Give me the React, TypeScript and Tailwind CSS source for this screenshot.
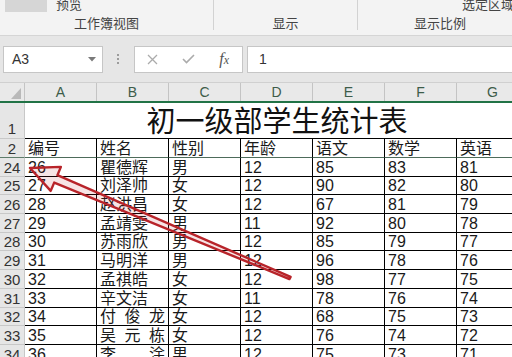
import React from 'react';

const cols = ['A', 'B', 'C', 'D', 'E', 'F', 'G'];
const heads = ['编号', '姓名', '性别', '年龄', '语文', '数学', '英语'];

const rows: string[][] = [
  ['24', '26', '瞿德辉', '男', '12', '85', '83', '81'],
  ['25', '27', '刘泽帅', '女', '12', '90', '82', '80'],
  ['26', '28', '赵洪昌', '女', '12', '67', '81', '79'],
  ['27', '29', '孟靖雯', '男', '11', '92', '80', '78'],
  ['28', '30', '苏雨欣', '男', '12', '85', '79', '77'],
  ['29', '31', '马明洋', '男', '12', '96', '78', '76'],
  ['30', '32', '孟祺皓', '女', '12', '98', '77', '75'],
  ['31', '33', '辛文洁', '女', '11', '78', '76', '74'],
  ['32', '34', '付俊龙', '女', '12', '68', '75', '73'],
  ['33', '35', '吴元栋', '女', '12', '76', '74', '72'],
  ['34', '36', '李涂', '男', '12', '75', '73', '71'],
];

// names typed with full-width spaces show up spread over the cell
const spread = new Set(['付俊龙', '吴元栋', '李涂']);

function RowHead({ label, className = '' }: { label: string; className?: string }) {
  return (
    <div
      className={`w-[25px] shrink-0 bg-[#e6e6e6] border-r border-b border-[#c8c8c8] flex items-end justify-center text-[15px] leading-[17px] text-[#333] ${className}`}
    >
      {label}
    </div>
  );
}

function Cell({ children, className = '' }: { children: React.ReactNode; className?: string }) {
  return (
    <div
      className={`w-[72px] shrink-0 border-r border-b border-black px-[3px] flex items-end text-[16px] leading-[17px] ${className}`}
    >
      {children}
    </div>
  );
}

function Ribbon() {
  return (
    <div className="flex h-[36px] shrink-0 bg-[#f3f3f3] border-b border-[#d5d5d5] text-[13px] leading-[13px] text-[#444]">
      <div className="w-[214px] shrink-0 h-[30px] border-r border-[#d2d2d2] flex flex-col justify-between">
        <div className="flex items-start">
          <div className="ml-[5px] w-[42px] h-[12px] bg-[#d6d6d6]" />
          <span className="ml-[9px] -mt-[2px]">预览</span>
        </div>
        <div className="text-center">工作簿视图</div>
      </div>
      <div className="w-[144px] shrink-0 h-[30px] border-r border-[#d2d2d2] flex flex-col justify-end">
        <div className="text-center">显示</div>
      </div>
      <div className="w-[164px] shrink-0 h-[30px] flex flex-col justify-between">
        <span className="pl-[104px] -mt-[2px] whitespace-nowrap">选定区域</span>
        <div className="text-center">显示比例</div>
      </div>
    </div>
  );
}

function FormulaBar() {
  return (
    <div className="h-[46px] shrink-0 bg-[#e6e6e6] flex items-center">
      <div className="ml-[3px] w-[100px] h-[27px] shrink-0 bg-white border border-[#c6c6c6] flex items-center justify-between pl-[8px] pr-[6px]">
        <span className="text-[14px] text-[#333]">A3</span>
        <svg width="8" height="5" viewBox="0 0 8 5">
          <path d="M0 0 L8 0 L4 4.5 Z" fill="#7a7a7a" />
        </svg>
      </div>
      <div className="ml-[14px] w-[2px] shrink-0 flex flex-col gap-[2px]">
        <span className="w-[2px] h-[2px] bg-[#9c9c9c]" />
        <span className="w-[2px] h-[2px] bg-[#9c9c9c]" />
        <span className="w-[2px] h-[2px] bg-[#9c9c9c]" />
      </div>
      <div className="ml-[15px] w-[109px] h-[27px] shrink-0 bg-white border border-[#c6c6c6] flex items-center">
        <span className="w-[36px] flex justify-center">
          <svg width="11" height="11" viewBox="0 0 11 11">
            <path d="M1 1 L10 10 M10 1 L1 10" stroke="#ababab" strokeWidth="1.3" fill="none" />
          </svg>
        </span>
        <span className="w-[36px] flex justify-center">
          <svg width="13" height="10" viewBox="0 0 13 10">
            <path d="M1 5 L4.5 8.5 L12 1" stroke="#ababab" strokeWidth="1.6" fill="none" />
          </svg>
        </span>
        <span className="w-[36px] text-center font-['Liberation_Serif',serif] italic text-[16px] text-[#555] leading-none">
          f<span className="text-[12px]">x</span>
        </span>
      </div>
      <div className="ml-[4px] w-[280px] h-[27px] shrink-0 bg-white border border-[#c6c6c6] flex items-center pl-[11px] text-[14px] text-[#333]">
        1
      </div>
    </div>
  );
}

function Sheet() {
  return (
    <div className="flex flex-col w-max">
      {/* column letters */}
      <div className="flex h-[21px] bg-[#e9e9e9] border-t border-[#d0d0d0] border-b-2 border-b-[#217346]">
        <div className="w-[25px] shrink-0 border-r border-[#c4c4c4] flex items-end justify-end pr-[3px] pb-[2px]">
          <svg width="10" height="11" viewBox="0 0 10 11">
            <path d="M10 0 L10 11 L0 11 Z" fill="#b9b9b9" />
          </svg>
        </div>
        {cols.map((c) => (
          <div
            key={c}
            className="w-[72px] shrink-0 border-r border-[#c4c4c4] flex items-center justify-center text-[14px] leading-[16px] text-[#3d5c49]"
          >
            {c}
          </div>
        ))}
      </div>

      {/* title row */}
      <div className="flex h-[36px]">
        <RowHead label="1" className="pb-[1px]" />
        <div className="w-[504px] shrink-0 border-b border-black flex items-end justify-center text-[29px] leading-[31px] text-[#111]">
          初一级部学生统计表
        </div>
      </div>

      {/* header row + freeze line */}
      <div className="flex h-[19px]">
        <RowHead label="2" className="border-b-[#5f7d6b]" />
        {heads.map((h) => (
          <Cell key={h} className="border-b-[#4d6b5a]">
            {h}
          </Cell>
        ))}
      </div>

      {rows.map(([n, ...vals]) => (
        <div key={n} className="flex h-[18.7px]">
          <RowHead label={n} />
          {vals.map((v, i) => (
            <Cell key={i}>
              {i === 1 && spread.has(v) ? (
                <span className="flex w-full justify-between">
                  {v.split('').map((ch, j) => (
                    <span key={j}>{ch}</span>
                  ))}
                </span>
              ) : (
                v
              )}
            </Cell>
          ))}
        </div>
      ))}
    </div>
  );
}

function Arrow() {
  // hand-drawn annotation pointing at cell A24
  return (
    <svg className="pointer-events-none absolute left-0 top-0" width="512" height="357" viewBox="0 0 512 357">
      <polygon
        points="30,168 60.9,166.9 57.4,175.2 290.6,276.9 289.4,279.1 54.2,182.6 50.7,190.9"
        fill="rgba(190,35,40,0.12)"
        stroke="#b8242a"
        strokeWidth="2.4"
        strokeLinejoin="round"
      />
    </svg>
  );
}

export default function App() {
  return (
    <div className="relative w-[512px] h-[357px] overflow-hidden bg-white font-['Liberation_Sans','Noto_Sans_CJK_SC',sans-serif] text-[#1a1a1a] flex flex-col">
      <Ribbon />
      <FormulaBar />
      <Sheet />
      <Arrow />
    </div>
  );
}
